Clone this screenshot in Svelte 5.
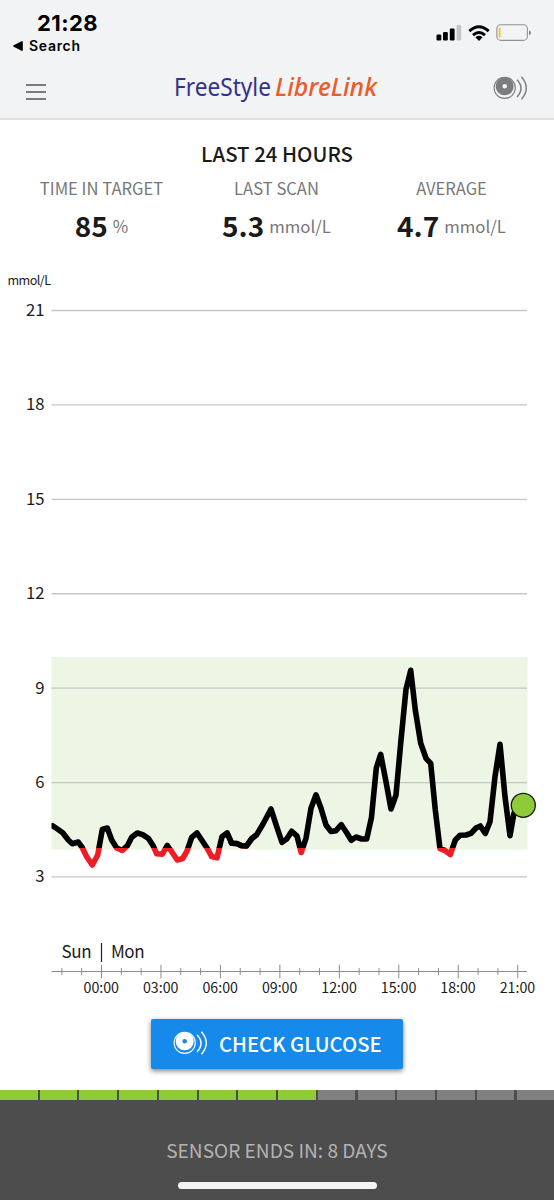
<script>
    const summary = [
        { label: 'TIME IN TARGET', value: '85', unit: '%' },
        { label: 'LAST SCAN', value: '5.3', unit: 'mmol/L' },
        { label: 'AVERAGE', value: '4.7', unit: 'mmol/L' }
    ];

    const levels = [21, 18, 15, 12, 9, 6, 3];
    const hours = ['00:00', '03:00', '06:00', '09:00', '12:00', '15:00', '18:00', '21:00'];

    const hourWidth = 19.82;
    const midnight = 101.5;
    const ticks = Array.from({ length: 24 }, (_, i) => i - 2);

    // glucose trace in chart units
    const trace = [
        [52.3, 825.7], [57.5, 829], [62.7, 832.7], [68.3, 840], [72.3, 843.7], [78.3, 842], [82.3, 847.7],
        [86.7, 856.7], [92.3, 865], [97.7, 855], [102.3, 829.5], [107.3, 828], [111.7, 840], [116.7, 848],
        [122.3, 850.5], [127.5, 845.5], [131.7, 837.3], [137.3, 833], [142.7, 834.7], [148.3, 838.3],
        [153.3, 846], [156.7, 853.8], [162.3, 854.2], [167.3, 845.5], [171.7, 851.7], [177.3, 860],
        [182.7, 858.5], [187, 851], [191.7, 837.3], [197, 833], [201.7, 840], [207, 848], [211.7, 856.6],
        [217, 857.8], [222, 836.7], [227, 833], [231.7, 843.3], [236.7, 843.5], [241.7, 845.8], [246.5, 846],
        [251.7, 838.7], [256.7, 834.7], [263, 824], [271, 809], [276.7, 826.7], [282, 842.3], [286.7, 839],
        [291.7, 831.3], [297, 836], [301.2, 852.5], [306, 838.3], [311, 808.3], [316, 794.8], [321, 808.3],
        [326, 825], [331, 831.5], [336, 830.7], [341.3, 824.7], [346.7, 832.7], [351.3, 840.3], [356, 837],
        [361.7, 839], [366.7, 839], [371.5, 817.3], [376.3, 768], [380.7, 754.3], [386, 781.7], [391, 809],
        [396, 795], [400.7, 743.3], [406, 689.3], [410.7, 670.3], [415.3, 710], [420.7, 743.3],
        [426, 758.3], [430.7, 763.3], [435.3, 810], [440, 848.7], [445, 850.5], [450.3, 854.5],
        [455.3, 840], [460, 835.3], [466, 835], [471, 833.3], [476, 828], [480.3, 826], [485.3, 833.5],
        [490, 821.7], [495, 776.7], [500, 744.3], [505, 796.7], [510, 835.7], [514, 813], [520, 806]
    ];
    const line = trace.map((p) => p.join(',')).join(' ');

    // the trace turns red below this height
    const lowLimit = 848;

    const totalDays = 14;
    const usedDays = 8;
    const days = Array.from({ length: totalDays }, (_, i) => i < usedDays);

    function levelY(level) {
        return 310.5 + (21 - level) * 31.47;
    }
</script>

{#snippet sensor()}
    <svg class="sensor" width="36" height="24" viewBox="0 0 36 24" fill="none" stroke="currentColor">
        <path fill="currentColor" fill-rule="evenodd" stroke="none" d="M11.7 1.3a9 9 0 1 0 0 18a9 9 0 1 0 0-18zM11.7 8a2.3 2.3 0 1 1 0 4.6a2.3 2.3 0 1 1 0-4.6z" />
        <circle cx="11.7" cy="11.8" r="10.6" stroke-width="1.1" />
        <path stroke-width="1.4" d="M24 3.7Q32 12 24 21M28.4.8Q38.2 12 28.4 23.4" />
    </svg>
{/snippet}

<div class="screen">
    <header>
        <div class="status">
            <div class="clock">
                <span class="time">21:28</span>
                <span class="back">
                    <svg width="10" height="10" viewBox="0 0 10 10"><path d="M.7 4.3 8.6.2Q9.8-.2 9.8 1v8q0 1.2-1.2.8L.7 5.7Q-.6 5 .7 4.3z" /></svg>
                    Search
                </span>
            </div>
            <div class="indicators">
                <svg width="26" height="16" viewBox="0 0 26 16">
                    <rect x=".5" y="9.5" width="4.8" height="6" rx="1.2" />
                    <rect x="7" y="7" width="4.8" height="8.5" rx="1.2" />
                    <rect x="13.8" y="3.5" width="4.8" height="12" rx="1.2" />
                    <rect x="20.6" y="0" width="4.6" height="15.5" rx="1.2" fill="#c4c5c7" />
                </svg>
                <svg width="22" height="16" viewBox="0 0 22 16" fill="none" stroke="#000" stroke-width="2.9">
                    <path d="M1.3 6.1Q11-2.8 20.7 6.1M5 10.1Q11 4.7 17 10.1" />
                    <path stroke="none" fill="#000" d="M7.4 12.2Q11 9.4 14.6 12.2L11 15.9z" />
                </svg>
                <svg width="36" height="18" viewBox="0 0 36 18">
                    <rect x=".8" y=".8" width="30.6" height="15.6" rx="4" fill="none" stroke="#929395" stroke-width="1.1" />
                    <rect x="2.6" y="3.4" width="2" height="10.4" rx="1" fill="#f4c63c" />
                    <path d="M33 6.2q2.1 1 2.1 2.5t-2.1 2.5z" fill="#858688" />
                </svg>
            </div>
        </div>
        <div class="bar">
            <button class="menu" aria-label="Menu"><i></i><i></i><i></i></button>
            <svg class="logo" width="212" height="40" viewBox="0 0 212 40">
                <text class="free" x="0" y="27.5" textLength="97" lengthAdjust="spacingAndGlyphs">FreeStyle</text>
                <text class="libre" x="101" y="27.5" textLength="102" lengthAdjust="spacingAndGlyphs">LibreLink</text>
            </svg>
            <button class="scan" aria-label="Scan">{@render sensor()}</button>
        </div>
    </header>

    <main>
        <h1>LAST 24 HOURS</h1>
        <div class="summary">
            {#each summary as item}
                <div class="item">
                    <div class="label">{item.label}</div>
                    <div class="reading">
                        <strong>{item.value}</strong>
                        <span>{item.unit}</span>
                    </div>
                </div>
            {/each}
        </div>

        <svg class="chart" width="554" height="762" viewBox="0 243 554 762">
            <defs>
                <clipPath id="in-range"><rect x="51.5" y="600" width="500" height={lowLimit - 600} /></clipPath>
                <clipPath id="below-range"><rect x="51.5" y={lowLimit} width="500" height="60" /></clipPath>
                <clipPath id="above-dip"><rect x="228" y="780" width="26" height="75" /></clipPath>
            </defs>
            <text class="unit" x="7.5" y="284.7" textLength="43.5">mmol/L</text>
            <rect x="51.5" y="657" width="476" height="192.5" fill="#edf5e4" />
            {#each levels as level}
                <line class="grid" x1="51.5" x2="527" y1={levelY(level)} y2={levelY(level)} />
                <text class="level" x="44.5" y={levelY(level) + 5.4}>{level}</text>
            {/each}
            <polyline class="trace" points={line} clip-path="url(#in-range)" />
            <polyline class="trace low" points={line} clip-path="url(#below-range)" />
            <!-- this stretch stays just in range, so its lower edge is black too -->
            <polyline class="trace" points={line} clip-path="url(#above-dip)" />
            <circle cx="523.3" cy="805.3" r="12" fill="#8ecb38" stroke="#14200a" stroke-width="1.3" />

            <text class="day" x="61.5" y="958" textLength="30">Sun</text>
            <line x1="101.5" x2="101.5" y1="943" y2="962" stroke="#222" stroke-width="1.2" />
            <text class="day" x="111" y="958" textLength="33.5">Mon</text>
            <line class="axis" x1="51.5" x2="527" y1="971.5" y2="971.5" />
            {#each ticks as tick}
                {@const x = midnight + tick * hourWidth}
                {@const size = tick % 3 === 0 ? 6.8 : 3.4}
                <line class="axis" x1={x} x2={x} y1={971.5 - size} y2={971.5 + size} />
            {/each}
            {#each hours as hour, i}
                <text class="hour" x={midnight - 18 + i * 3 * hourWidth} y="993.3" textLength="35.5" lengthAdjust="spacingAndGlyphs">{hour}</text>
            {/each}
        </svg>

        <button class="check">
            {@render sensor()}
            <span>CHECK GLUCOSE</span>
        </button>
    </main>

    <footer>
        <div class="days">
            {#each days as used}
                <div class="day-cell" class:used></div>
            {/each}
        </div>
        <p>SENSOR ENDS IN: 8 DAYS</p>
        <div class="home"></div>
    </footer>
</div>

<style>
    :global(body) {
        margin: 0;
        background: #fff;
    }
    .screen {
        display: flex;
        flex-direction: column;
        width: 554px;
        height: 1200px;
        overflow: hidden;
        background: #fff;
        color: #1b1b1b;
        font-family: "Noto Sans CJK SC", "Noto Sans", sans-serif;
    }
    button {
        border: none;
        background: none;
        padding: 0;
        font-family: inherit;
        cursor: pointer;
    }
    svg {
        display: block;
        flex: none;
    }
    header {
        box-sizing: border-box;
        height: 120px;
        background: #f1f3f5;
        border-bottom: 2px solid #dddfe0;
    }
    .status {
        display: flex;
        justify-content: space-between;
        height: 62px;
        box-sizing: border-box;
        padding: 11px 22px 0 13px;
        color: #000;
        font-family: Inter, sans-serif;
    }
    .clock {
        display: flex;
        flex-direction: column;
    }
    .time {
        padding-left: 24px;
        font-size: 22px;
        font-weight: 700;
        line-height: 25px;
        letter-spacing: 0.4px;
    }
    .back {
        display: flex;
        align-items: center;
        gap: 6px;
        font-size: 14px;
        font-weight: 600;
        line-height: 20px;
        letter-spacing: 0.7px;
    }
    .indicators {
        display: flex;
        align-items: center;
        gap: 6px;
        height: 44px;
    }
    .bar {
        display: flex;
        align-items: center;
        height: 51px;
        padding: 0 25px 0 26px;
    }
    .menu {
        display: flex;
        flex-direction: column;
        gap: 5px;
        width: 148px;
        padding-top: 8px;
    }
    .menu i {
        width: 20px;
        height: 2px;
        background: #7b7c7e;
    }
    .logo text {
        font-family: "Noto Sans", "Open Sans", sans-serif;
        font-size: 25.5px;
    }
    .logo .free {
        fill: #35318a;
    }
    .logo .libre {
        fill: #ee5a29;
        font-style: italic;
        font-weight: 500;
    }
    .scan {
        margin-left: auto;
        color: #7b7c7e;
    }
    main {
        display: flex;
        flex-direction: column;
        height: 970px;
        box-sizing: border-box;
        padding-top: 21px;
    }
    h1 {
        margin: 0 0 12px;
        font-size: 20.4px;
        font-weight: 500;
        line-height: 24px;
        text-align: center;
    }
    .summary {
        display: grid;
        grid-template-columns: repeat(3, 1fr);
        height: 66px;
        padding: 0 15px 0 14px;
    }
    .item {
        text-align: center;
    }
    .label {
        margin-bottom: 7px;
        color: #777;
        font-size: 16.6px;
        line-height: 22px;
        font-weight: 400;
    }
    .reading {
        display: flex;
        align-items: center;
        justify-content: center;
        gap: 5px;
        line-height: 36px;
    }
    .reading strong {
        font-size: 28px;
        font-weight: 700;
    }
    .reading span {
        padding-top: 2px;
        color: #777;
        font-size: 16.8px;
    }
    .chart text {
        fill: #1b1b1b;
    }
    .chart .unit {
        font-size: 12.6px;
    }
    .chart .level {
        font-size: 16.7px;
        text-anchor: end;
    }
    .chart .day {
        font-size: 17px;
    }
    .chart .hour {
        font-size: 14.3px;
    }
    .grid {
        stroke: #c5c7c3;
        stroke-width: 1.3;
    }
    .axis {
        stroke: #8c8c8c;
        stroke-width: 1;
    }
    .trace {
        fill: none;
        stroke: #000;
        stroke-width: 5.6;
        stroke-linejoin: round;
        stroke-linecap: round;
    }
    .trace.low {
        stroke: #ee1c25;
    }
    .check {
        display: flex;
        align-items: center;
        align-self: center;
        gap: 10px;
        width: 252px;
        height: 50px;
        margin-top: 14px;
        padding: 0 0 2px 22px;
        border-radius: 2px;
        background: #168aea;
        box-shadow: 0 2px 5px rgba(0, 0, 0, 0.5);
        color: #fff;
        font-size: 20.2px;
        font-weight: 500;
        white-space: nowrap;
    }
    footer {
        display: flex;
        flex-direction: column;
        align-items: center;
        height: 110px;
        background: #4d4d4d;
    }
    .days {
        display: grid;
        grid-template-columns: repeat(13, 37.6px) 1fr;
        gap: 2.15px;
        width: 100%;
        height: 10px;
    }
    .day-cell {
        background: #808080;
    }
    .day-cell.used {
        background: #8ecb38;
    }
    footer p {
        margin: 36px 0 18px;
        color: #b3b3b3;
        font-size: 19.1px;
        font-weight: 400;
        line-height: 28px;
    }
    .home {
        width: 199px;
        height: 7px;
        border-radius: 4px;
        background: #f4f4f4;
    }
</style>
